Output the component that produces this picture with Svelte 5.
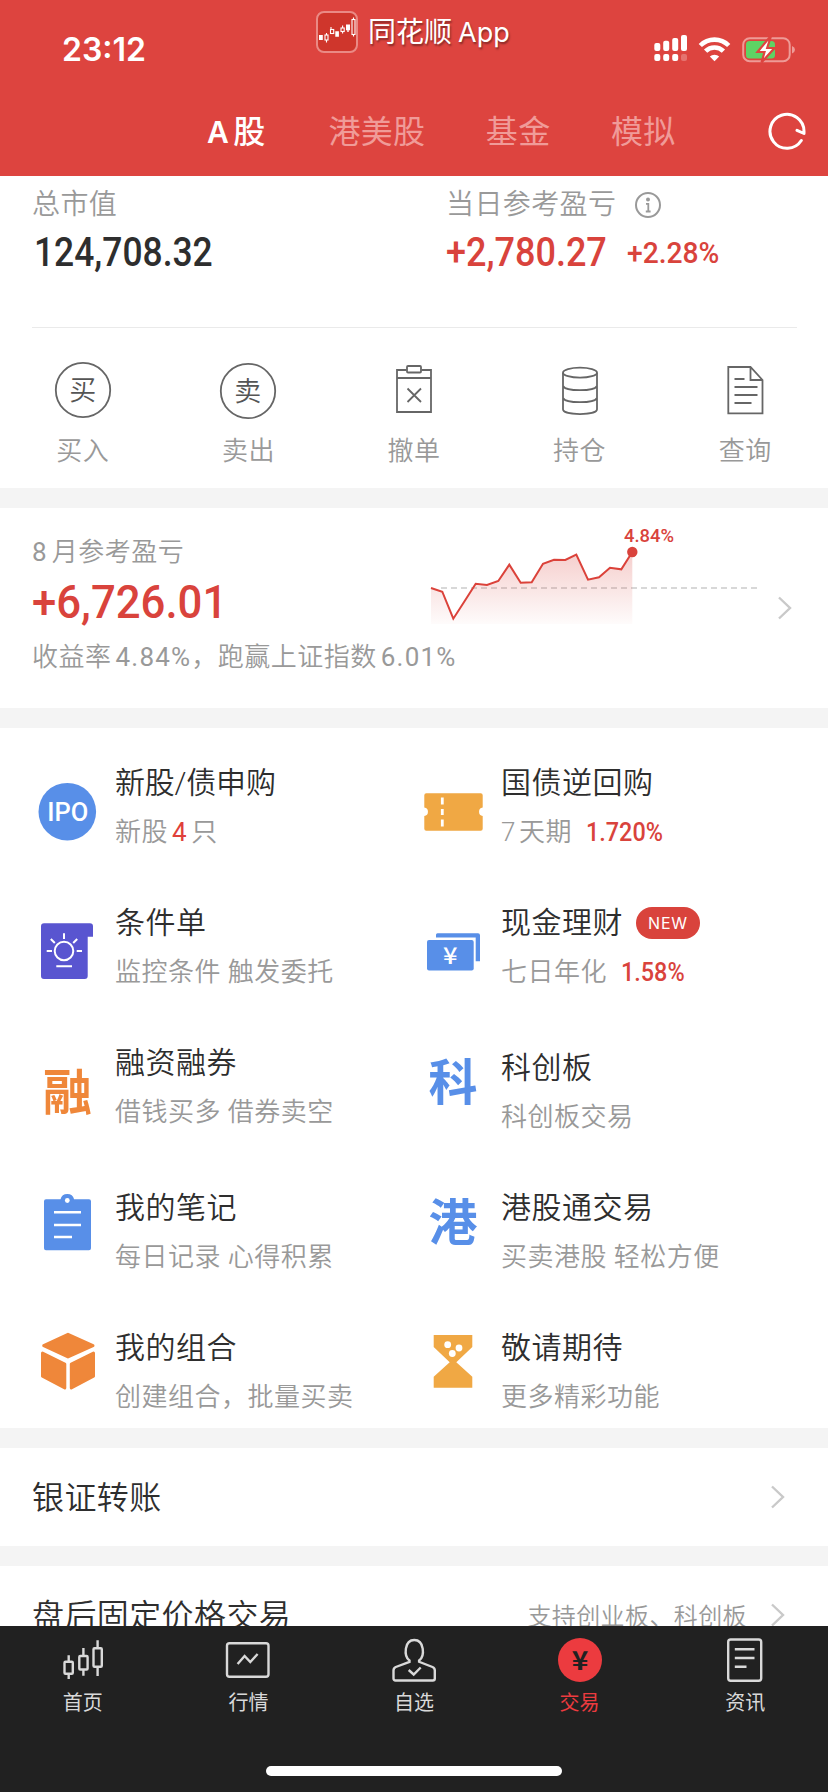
<script lang="ts">
  const tabs = ['A股', '港美股', '基金', '模拟']
  let active = $state('A股')

  const actions = [
    { icon: 'buy', label: '买入' },
    { icon: 'sell', label: '卖出' },
    { icon: 'cancel', label: '撤单' },
    { icon: 'hold', label: '持仓' },
    { icon: 'query', label: '查询' }
  ]

  type Item = {
    icon: string
    title: string
    desc: string
    days?: string
    rate?: string
    count?: string
    unit?: string
    badge?: string
    upper?: boolean
    spaced?: boolean
    tight?: boolean
  }

  const menu: Item[][] = [
    [
      { icon: 'ipo', title: '新股/债申购', desc: '新股', count: '4', unit: '只', tight: true },
      { icon: 'condition', title: '条件单', desc: '监控条件 触发委托' },
      { icon: 'margin', title: '融资融券', desc: '借钱买多 借券卖空' },
      { icon: 'note', title: '我的笔记', desc: '每日记录 心得积累', upper: true, spaced: true },
      { icon: 'cube', title: '我的组合', desc: '创建组合，批量买卖', upper: true }
    ],
    [
      { icon: 'ticket', title: '国债逆回购', days: '7', desc: '天期', rate: '1.720%' },
      { icon: 'cash', title: '现金理财', desc: '七日年化', rate: '1.58%', badge: 'NEW' },
      { icon: 'star', title: '科创板', desc: '科创板交易', upper: true, spaced: true },
      { icon: 'hk', title: '港股通交易', desc: '买卖港股 轻松方便', upper: true },
      { icon: 'soon', title: '敬请期待', desc: '更多精彩功能', upper: true }
    ]
  ]

  const nav = [
    { icon: 'home', label: '首页' },
    { icon: 'market', label: '行情' },
    { icon: 'self', label: '自选' },
    { icon: 'trade', label: '交易' },
    { icon: 'news', label: '资讯' }
  ]
  let current = $state('trade')

  const points = [
    [0, 68], [11.3, 71.7], [22.3, 98.7], [33.7, 81], [44.7, 63.7], [56, 65], [67.3, 61],
    [78.3, 44.7], [89.7, 62.7], [100.7, 62.3], [112, 43.7], [123, 39.7], [134.3, 40],
    [145.3, 34.7], [157, 59.7], [168, 57.3], [179, 47.7], [190.3, 49.3], [201.3, 32]
  ]
  const line = points.map((p) => p.join(',')).join(' ')
</script>

{#snippet chevron()}
  <svg class="chevron" width="16" height="26" viewBox="0 0 16 26">
    <path d="M3 2.500 14 13 3 23.500" fill="none" stroke="#c9c9c9" stroke-width="2.400" />
  </svg>
{/snippet}

<div class="page">
  <header class="header">
    <div class="status">
      <span class="time">23:12</span>
      <div class="brand">
        <svg width="42" height="42" viewBox="0 0 42 42">
          <rect x="1" y="1" width="40" height="40" rx="7" fill="#cf362c" stroke="#ea8a85" stroke-width="2" />
          <g fill="none" stroke="#fff" stroke-width="1.100">
            <rect x="9" y="24" width="3" height="5" />
            <rect x="14.500" y="18.500" width="3.200" height="4" />
            <rect x="25" y="17" width="3.200" height="3.500" />
            <rect x="36" y="8.500" width="3" height="15" />
            <path d="M10.500 22v2M10.500 29v2.500M15 16v2.500M26.600 14.500V17M26.600 20.500V22.500M37.500 6.500v2M37.500 23.500v2" />
          </g>
          <path d="M3 24h3.800v5H3zM19.300 20.300h3.600v5.400h-3.600zM30 13.500h4v5.800h-4zM31.300 19h1.400v2h-1.400z" fill="#fff" />
        </svg>
        <span class="name">同花顺</span><span class="name latin">App</span>
      </div>
      <svg class="signals" width="142" height="30" viewBox="0 0 142 30">
        <g fill="#fff">
          <rect x="0.300" y="9" width="6" height="8" rx="2" />
          <rect x="9.200" y="6.700" width="6" height="10.300" rx="2" />
          <rect x="18.200" y="4" width="6" height="13" rx="2" />
          <rect x="27" y="1" width="6" height="16" rx="2" />
          <rect x="0.300" y="20" width="6" height="7" rx="2" />
          <rect x="9.200" y="20" width="6" height="7" rx="2" />
          <rect x="18.200" y="20" width="6" height="7" rx="2" />
          <rect x="27" y="20" width="6" height="7" rx="2" opacity="0.250" />
        </g>
        <g fill="none" stroke="#fff" stroke-width="4.600">
          <path d="M46.300 11.500a20 20 0 0 1 28.400 0" />
          <path d="M51.600 17.200a12.600 12.600 0 0 1 17.800 0" />
        </g>
        <path d="M60.500 27.300 55.800 22.600a6.700 6.700 0 0 1 9.400 0z" fill="#fff" />
        <rect x="89.200" y="4.200" width="46.500" height="23" rx="6.500" fill="none" stroke="#ee9b97" stroke-width="2" />
        <path d="M138 12v7.500q3-1.300 3-3.750T138 12" fill="#ee9b97" />
        <rect x="92" y="7" width="29" height="17.500" rx="3.500" fill="#5fd364" />
        <path d="M115.500 3.500 103.500 18h7l-3 10.500 13-14.500h-7.300l3.300-10.500z" fill="#fff" stroke="#dd443f" stroke-width="2.200" />
      </svg>
    </div>
    <nav class="tabs">
      {#each tabs as tab}
        <button class="tab" class:active={active === tab} onclick={() => (active = tab)}>
          {#if tab === 'A股'}<span class="letter">A</span>股{:else}{tab}{/if}
        </button>
      {/each}
      <svg class="refresh" width="40" height="40" viewBox="0 0 40 40">
        <path d="M34.300 29.500A17 17 0 1 1 37 20.300v2.200l-7-3.200" fill="none" stroke="#fff" stroke-width="3" stroke-linejoin="round" stroke-linecap="round" />
      </svg>
    </nav>
  </header>

  <main class="content">
    <section class="assets">
      <div class="asset">
        <div class="label">总市值</div>
        <div class="value"><span class="num total">124,708.32</span></div>
      </div>
      <div class="asset">
        <div class="label">
          当日参考盈亏
          <svg class="info" width="28" height="28" viewBox="0 0 28 28">
            <circle cx="14" cy="14" r="12" fill="none" stroke="#999" stroke-width="2" />
            <circle cx="14" cy="8.500" r="2" fill="#999" />
            <path d="M12 12.800h2.300v7.500M11.800 20.500h4.800" fill="none" stroke="#999" stroke-width="1.800" />
          </svg>
        </div>
        <div class="value red">
          <span class="num day">+2,780.27</span>
          <span class="num rate">+2.28%</span>
        </div>
      </div>
    </section>

    <section class="actions">
      {#each actions as { icon, label }}
        <div class="action">
          <svg width="60" height="60" viewBox="0 0 60 60" fill="none" stroke="#666" stroke-width="1.800">
            {#if icon === 'buy' || icon === 'sell'}
              <circle cx="30" cy={icon === 'buy' ? 30 : 31} r="27.200" />
              <text class="glyph" x="30" y={icon === 'buy' ? 40 : 41}>{icon === 'buy' ? '买' : '卖'}</text>
            {:else if icon === 'cancel'}
              <path d="M22.500 10h-9.500v42h34V10h-9.500M13 18h34M23.500 28.500l13.500 13.500M37 28.500 23.500 42" />
              <rect x="23" y="6" width="14" height="6.500" rx="1" />
            {:else if icon === 'hold'}
              <ellipse cx="30" cy="12.700" rx="17" ry="5" />
              <path d="M13 12.700v36.600c0 6.300 34 6.300 34 0V12.700M13 26c3 5.600 31 5.600 34 0M13 38c3 5.600 31 5.600 34 0" />
            {:else}
              <path d="M35.500 7H13.300v46.300h34.200V20zM35.500 7v13h12M19.500 19h10M19.500 27h23M19.500 35h23M19.500 43h17" />
            {/if}
          </svg>
          <span>{label}</span>
        </div>
      {/each}
    </section>

    <section class="month">
      <div class="summary">
        <div class="label"><span class="digits">8</span><i></i>月参考盈亏</div>
        <div class="value red"><span class="num big">+6,726.01</span></div>
        <div class="label">收益率<i></i><span class="digits">4.84%</span>，跑赢上证指数<i></i><span class="digits">6.01%</span></div>
      </div>
      <svg class="chart" width="332" height="108" viewBox="0 0 332 108">
        <defs>
          <linearGradient id="area" x1="0" y1="0" x2="0" y2="1">
            <stop offset="0" stop-color="#d9433c" stop-opacity="0.260" />
            <stop offset="1" stop-color="#d9433c" stop-opacity="0.020" />
          </linearGradient>
        </defs>
        <path d="M10 68H326" stroke="#ccc" stroke-width="1.300" stroke-dasharray="6 4" />
        <polygon points="{line} 201.3,104 0,104" fill="url(#area)" />
        <polyline points={line} fill="none" stroke="#db423a" stroke-width="2" />
        <circle cx="201.300" cy="32" r="5.200" fill="#d9433c" />
        <text class="peak" x="193" y="22" textLength="50" lengthAdjust="spacingAndGlyphs">4.84%</text>
      </svg>
      {@render chevron()}
    </section>

    <section class="menu">
      {#each menu as column}
        <div class="column">
          {#each column as item}
            <div class="item" class:upper={item.upper} class:spaced={item.spaced}>
              <svg class="pic" width="60" height="60" viewBox="0 0 60 60">
                {#if item.icon === 'ipo'}
                  <circle cx="29.300" cy="29.700" r="28.800" fill="#588fe8" />
                  <text class="ipo" x="29.800" y="38.700" textLength="41" lengthAdjust="spacingAndGlyphs">IPO</text>
                {:else if item.icon === 'condition'}
                  <path d="M6 1.300h46q3 0 3 3v10.400h-5.300v39.300q0 3-3 3H6q-3 0-3-3v-49.700q0-3 3-3z" fill="#5955d0" />
                  <g fill="none" stroke="#fff" stroke-width="2">
                    <circle cx="26" cy="29" r="9.300" />
                    <path d="M26 11.300v5.700M8.700 29H14M38.700 29H44M12.800 17l4 4M39.200 17l-4 4M18.300 44.300H34" />
                  </g>
                {:else if item.icon === 'margin'}
                  <text class="word orange" x="29.500" y="47.500">融</text>
                {:else if item.icon === 'note'}
                  <path d="M8 7.300h14.500a7 7 0 0 1 13.600 0H51q2 0 2 2v47q0 2-2 2H8q-2 0-2-2v-47q0-2 2-2z" fill="#588fe8" />
                  <circle cx="29.300" cy="8.500" r="2.400" fill="#fff" />
                  <path d="M16 20.300h27M16 33h27M16 45h18" stroke="#fff" stroke-width="2.400" />
                {:else if item.icon === 'cube'}
                  <g fill="#ef873a" stroke="#ef873a" stroke-width="3" stroke-linejoin="round">
                    <path d="M30 2.300 55 13.700 30 25 5.700 13.700z" />
                    <path d="M4.500 21 26.800 32v24L4.500 44.200zM55.500 21 33.300 32v24l22.200-11.800z" />
                  </g>
                {:else if item.icon === 'ticket'}
                  <path d="M2.300 11.300h54.400q2 0 2 2v12.200a4.300 4.300 0 0 0 0 8.500v12.700q0 2-2 2H2.300q-2 0-2-2V34a4.300 4.300 0 0 0 0-8.500V13.300q0-2 2-2z" fill="#f0a844" />
                  <path d="M18.300 15.500v7M18.300 27v6M18.300 37.500v7" stroke="#fff" stroke-width="2.800" />
                {:else if item.icon === 'cash'}
                  <path d="M13.500 11.300H54q2 0 2 2v26h-4.300V15.500H12v-2.700q0-1.500 1.500-1.500z" fill="#588fe8" />
                  <rect x="3" y="18" width="46.700" height="30.500" rx="2" fill="#588fe8" />
                  <text class="yen" x="19" y="42" textLength="14.500" lengthAdjust="spacingAndGlyphs">¥</text>
                {:else if item.icon === 'star'}
                  <text class="word blue" x="29" y="47.500">科</text>
                {:else if item.icon === 'hk'}
                  <text class="word blue" x="29" y="47.500">港</text>
                {:else}
                  <path d="M9.700 3h38.600v12L32.300 30.300l16 14.400v11H9.700v-11l16-14.400L9.700 15z" fill="#f0a844" />
                  <g fill="#fff">
                    <circle cx="23.700" cy="12.700" r="3.400" />
                    <circle cx="35" cy="16" r="3.400" />
                    <circle cx="28.300" cy="21.500" r="3.400" />
                  </g>
                {/if}
              </svg>
              <div class="text">
                <div class="title" class:tight={item.tight}>
                  {item.title}
                  {#if item.badge}<span class="badge">{item.badge}</span>{/if}
                </div>
                <div class="desc">
                  {#if item.days}<span class="days">{item.days}</span>{/if}{item.desc}{#if item.count}<span class="count">{item.count}</span>{item.unit}{/if}
                  {#if item.rate}<span class="num yield">{item.rate}</span>{/if}
                </div>
              </div>
            </div>
          {/each}
        </div>
      {/each}
    </section>

    <section class="row">
      <span class="caption">银证转账</span>
      {@render chevron()}
    </section>
    <section class="row">
      <span class="caption">盘后固定价格交易</span>
      <span class="hint">支持创业板、科创板</span>
      {@render chevron()}
    </section>
  </main>

  <footer class="footer">
    <nav class="nav">
      {#each nav as { icon, label }}
        <button class="nav-item" class:current={current === icon} onclick={() => (current = icon)}>
          <svg width="48" height="48" viewBox="0 0 48 48" fill="none" stroke="#d9d9d9" stroke-width="2.400">
            {#if icon === 'home'}
              <rect x="5.500" y="25.700" width="8.300" height="12" rx="1" />
              <rect x="20.300" y="20" width="8.300" height="13.500" rx="1" />
              <rect x="34.500" y="12.300" width="8.300" height="18.500" rx="1" />
              <path d="M9.700 19.300v6M9.700 38v5M24.400 12v8M24.400 34v5.700M38.600 4.300v8M38.600 31v9" />
            {:else if icon === 'market'}
              <rect x="3" y="7.300" width="41.500" height="33.500" rx="2.500" />
              <path d="M13.600 28l7-8 5.700 6 7.300-8" />
            {:else if icon === 'self'}
              <path d="M19.500 24.500C13.500 20 14.300 4 24.300 4s10.800 16 4.800 20.500v1.300L42.500 31q2.300 1 2.300 3.500V42.500q0 2-2 2H5.500q-2 0-2-2V34.500q0-2.500 2.300-3.500l13.700-5.200z" />
              <path d="M18.700 34l5 4.500 7-7" />
            {:else if icon === 'trade'}
              <circle cx="24" cy="24" r="22" fill="#ec3b3f" stroke="none" />
              <text class="coin" x="15.700" y="33.500" textLength="16.600" lengthAdjust="spacingAndGlyphs">¥</text>
            {:else}
              <rect x="7.200" y="3.500" width="33" height="41.200" rx="2.500" />
              <path d="M13.800 13.300h19.700M13.800 22h19.700M13.800 30.700h11.700" />
            {/if}
          </svg>
          <span>{label}</span>
        </button>
      {/each}
    </nav>
    <div class="indicator"></div>
  </footer>
</div>

<style>
  :global(body) {
    margin: 0;
  }
  .page {
    width: 828px;
    height: 1792px;
    display: flex;
    flex-direction: column;
    overflow: hidden;
    background-color: #fff;
    color: #2e2e2e;
    font-family: Roboto, 'Noto Sans CJK SC', sans-serif;
  }
  svg {
    display: block;
    flex: none;
  }
  button {
    border: 0;
    padding: 0;
    background: none;
    color: inherit;
    font-family: inherit;
    cursor: pointer;
  }
  .red {
    color: #d9433c;
  }

  .header {
    height: 176px;
    flex: none;
    background-color: #dd443f;
    color: #fff;
  }
  .status {
    height: 86px;
    display: flex;
    align-items: flex-start;
    padding-left: 62px;
  }
  .time {
    width: 254px;
    margin-top: 30px;
    font: 600 32px/40px Inter, sans-serif;
  }
  .brand {
    display: flex;
    align-items: center;
    width: 338px;
    margin-top: 10px;
    font-size: 28px;
    line-height: 42px;
    text-shadow: 1px 2px 2px rgba(0, 0, 0, 0.4);
  }
  .brand svg {
    margin-right: 10px;
  }
  .name {
    padding-top: 2px;
  }
  .latin {
    margin-left: 6px;
    font-family: Inter, sans-serif;
    font-size: 27px;
  }
  .signals {
    margin-top: 34px;
  }
  .tabs {
    height: 90px;
    display: flex;
    align-items: center;
    padding-left: 207px;
  }
  .tab {
    margin-right: 60.5px;
    padding-top: 2px;
    font-size: 32px;
    line-height: 44px;
    letter-spacing: 0.3px;
    white-space: nowrap;
    color: #f09b98;
  }
  .tab.active {
    margin-right: 63px;
    color: #fff;
    font-weight: 500;
  }
  .letter {
    margin-right: 4px;
    font-family: Inter, sans-serif;
    font-size: 30px;
    font-weight: 600;
  }
  .refresh {
    margin: 0 21px 0 auto;
  }

  .content {
    flex: 1;
    min-height: 0;
    overflow: hidden;
  }
  .label {
    display: flex;
    align-items: center;
    color: #999;
    font-size: 26px;
    font-weight: 350;
    line-height: 36px;
    letter-spacing: 0.5px;
    white-space: nowrap;
  }
  .label i {
    flex: none;
    width: 4px;
  }
  .digits {
    font-weight: 400;
    letter-spacing: 1.2px;
  }
  .value {
    display: flex;
    white-space: nowrap;
  }
  .num {
    display: inline-block;
    font-weight: 500;
    transform: scaleX(0.9);
    transform-origin: left center;
  }

  .assets {
    height: 151px;
    display: flex;
    margin: 0 31px 0 32px;
    border-bottom: 1px solid #eaeaea;
  }
  .asset {
    width: 414px;
    flex: none;
    padding-top: 10px;
  }
  .asset + .asset {
    width: 350px;
  }
  .assets .label {
    font-size: 28px;
    line-height: 38px;
    letter-spacing: 0.4px;
  }
  .info {
    margin-left: 18px;
  }
  .assets .value {
    margin-top: 4px;
    font-size: 40px;
    line-height: 50px;
  }
  .total {
    margin-left: 2px;
    transform: scaleX(0.885);
  }
  .rate {
    margin-left: 2px;
    font-size: 30px;
    transform: scaleX(0.94);
  }

  .actions {
    height: 160px;
    display: flex;
    border-bottom: 20px solid #f4f4f4;
  }
  .action {
    flex: 1;
    display: flex;
    flex-direction: column;
    align-items: center;
    padding-top: 32px;
    color: #999;
    font-size: 26px;
    font-weight: 350;
    line-height: 36px;
    letter-spacing: 0.5px;
  }
  .action span {
    margin-top: 13px;
  }
  .glyph {
    fill: #555;
    stroke: none;
    font-size: 27px;
    text-anchor: middle;
  }

  .month {
    height: 200px;
    display: flex;
    align-items: flex-start;
    padding-left: 32px;
    border-bottom: 20px solid #f4f4f4;
  }
  .summary {
    width: 399px;
    flex: none;
    padding-top: 26px;
  }
  .month .value {
    margin: 2px 0 7px;
    font-size: 47px;
    line-height: 60px;
  }
  .big {
    transform: scaleX(0.93);
  }
  .chart {
    margin-top: 12px;
    overflow: visible;
  }
  .month .chevron {
    margin: 87px 0 0 13px;
  }
  .peak {
    fill: #d9433c;
    font-size: 19px;
    font-weight: 500;
  }

  .menu {
    height: 700px;
    display: flex;
    padding-left: 38px;
    border-bottom: 20px solid #f4f4f4;
  }
  .column {
    width: 386px;
  }
  .item {
    height: 140px;
    display: flex;
    align-items: flex-start;
  }
  .item.spaced {
    margin-top: 5px;
  }
  .pic {
    margin: 54px 17px 0 0;
  }
  .upper .pic {
    margin-top: 39px;
  }
  .text {
    padding-top: 35px;
    white-space: nowrap;
  }
  .title {
    display: flex;
    align-items: center;
    font-size: 30px;
    font-weight: 350;
    line-height: 40px;
    letter-spacing: 0.5px;
  }
  .title.tight {
    letter-spacing: -0.2px;
  }
  .desc {
    display: flex;
    align-items: center;
    margin-top: 11px;
    color: #999;
    font-size: 26px;
    font-weight: 350;
    line-height: 36px;
    letter-spacing: 0.5px;
  }
  .days {
    margin-right: 3px;
    font-weight: 300;
  }
  .count {
    margin: 0 4px;
    color: #e0403a;
    font-weight: 400;
  }
  .yield {
    margin-left: 14px;
    color: #d9433c;
    letter-spacing: 0;
  }
  .badge {
    width: 64px;
    height: 32px;
    margin-left: 13px;
    border-radius: 16px;
    background-color: #d9433c;
    color: #fff;
    font: 400 16px/32px Inter, sans-serif;
    letter-spacing: 0.8px;
    text-align: center;
  }
  .ipo {
    fill: #fff;
    font-size: 25.5px;
    font-weight: 500;
    text-anchor: middle;
  }
  .word {
    font-size: 49px;
    font-weight: 700;
    text-anchor: middle;
  }
  .orange {
    fill: #ef873a;
  }
  .blue {
    fill: #588fe8;
  }
  .yen {
    fill: #fff;
    font-family: 'Noto Sans CJK SC', sans-serif;
    font-size: 23px;
    font-weight: 500;
  }

  .row {
    height: 98px;
    display: flex;
    align-items: center;
    padding: 0 43px 0 32px;
    border-bottom: 20px solid #f4f4f4;
    font-size: 32px;
    font-weight: 350;
    letter-spacing: 0.4px;
  }
  .row .chevron {
    margin-left: auto;
  }
  .caption {
    padding-bottom: 4px;
  }
  .hint {
    margin-left: auto;
    padding-bottom: 2px;
    color: #999;
    font-size: 24px;
  }
  .row .hint + .chevron {
    margin-left: 22px;
  }

  .footer {
    height: 166px;
    flex: none;
    background-color: #212121;
  }
  .nav {
    height: 140px;
    display: flex;
  }
  .nav-item {
    flex: 1;
    display: flex;
    flex-direction: column;
    align-items: center;
    padding-top: 10px;
    color: #d9d9d9;
    font-size: 20px;
    line-height: 30px;
  }
  .nav-item span {
    margin-top: 4px;
  }
  .nav-item.current {
    color: #ec3b3f;
  }
  .coin {
    fill: #212121;
    stroke: none;
    font-family: 'Noto Sans CJK SC', sans-serif;
    font-size: 26px;
    font-weight: 700;
  }
  .indicator {
    width: 296px;
    height: 10px;
    margin: 0 auto;
    border-radius: 5px;
    background-color: #fff;
  }
</style>
